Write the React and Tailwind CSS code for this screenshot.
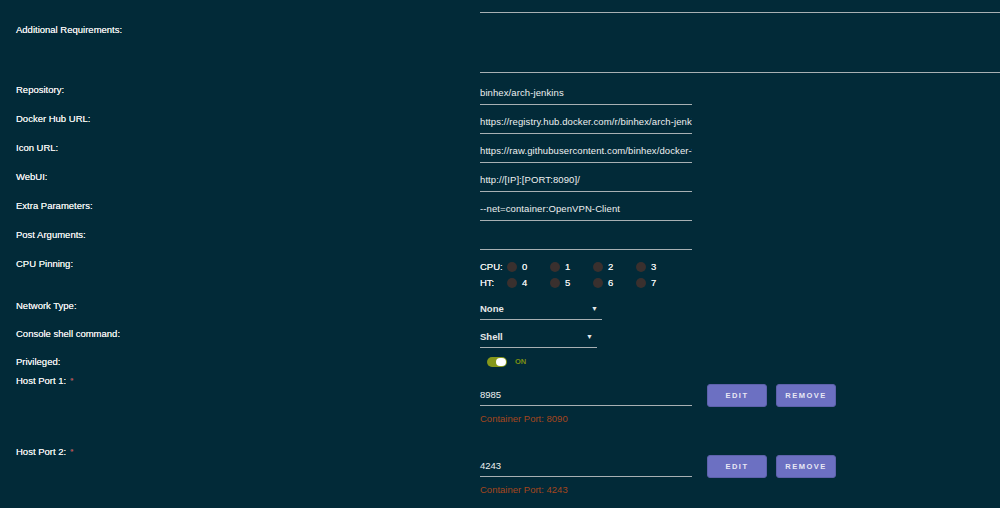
const font = { fontFamily: '"Liberation Sans", Arial, sans-serif' };

function Label({ children, required }) {
  return (
    <div className="w-[480px] shrink-0 pl-4 leading-[12px] text-[9.5px] text-[#eceeee] [text-shadow:0_0_0.3px_#eceeee]">
      {children}
      {required && <span className="ml-1 align-top text-[8px] text-[#b0181c]">*</span>}
    </div>
  );
}

function Field({ value, width = 'w-[212px]' }) {
  return (
    <div className={`${width} h-[21px] pt-[3px] border-b border-[#a8b0b3] leading-[12px] text-[9.5px] tracking-[0.1px] text-[#eef0f0] whitespace-nowrap overflow-hidden`}>
      {value}
    </div>
  );
}

function Row({ label, value }) {
  return (
    <div className="flex h-[29px]">
      <Label>{label}</Label>
      <Field value={value} />
    </div>
  );
}

function Select({ value, width }) {
  return (
    <div className={`${width} h-[20px] pt-[3px] pr-1 border-b border-[#a8b0b3] flex justify-between leading-[12px] text-[9.5px] font-semibold text-[#e6e8e8]`}>
      <span>{value}</span>
      <span className="text-[7px]">▼</span>
    </div>
  );
}

function Core({ n }) {
  return (
    <div className="flex items-center w-[43px]">
      <span className="w-[10px] h-[10px] rounded-full bg-[#3a302e]" />
      <span className="ml-[5px]">{n}</span>
    </div>
  );
}

function Port({ idx, port, container }) {
  return (
    <div className="flex h-[71px]">
      <Label required>{`Host Port ${idx}:`}</Label>
      <div className="pt-[9px]">
        <div className="flex items-center">
          <div className="w-[212px] h-[21px] pt-[4px] border-b border-[#a8b0b3] leading-[12px] text-[9.5px] text-[#eef0f0]">
            {port}
          </div>
          <button className="ml-[15px] w-[60px] h-[23px] rounded-[3px] bg-[#6c70c2] border border-[#5d61ab] text-[7.5px] font-bold tracking-[0.2em] text-[#e8e8f4]">
            EDIT
          </button>
          <button className="ml-[9px] w-[60px] h-[23px] rounded-[3px] bg-[#6c70c2] border border-[#5d61ab] text-[7.5px] font-bold tracking-[0.2em] text-[#e8e8f4]">
            REMOVE
          </button>
        </div>
        <div className="mt-[6px] leading-[12px] text-[9.5px] text-[#a5461d]">Container Port: {container}</div>
      </div>
    </div>
  );
}

export default function App() {
  return (
    <div className="w-[1000px] h-[508px] overflow-hidden bg-[#022a38]" style={font}>
      <div className="flex h-[13px]">
        <div className="w-[480px] shrink-0" />
        <div className="flex-1 border-b border-[#a8b0b3]" />
      </div>
      <div className="flex h-[71px]">
        <div className="pt-[11px]">
          <Label>Additional Requirements:</Label>
        </div>
        <div className="flex-1 h-[60px] border-b border-[#a8b0b3]" />
      </div>

      <Row label="Repository:" value="binhex/arch-jenkins" />
      <Row label="Docker Hub URL:" value="https://registry.hub.docker.com/r/binhex/arch-jenkins/" />
      <Row label="Icon URL:" value="https://raw.githubusercontent.com/binhex/docker-templates/master/binhex/images/jenkins-icon.png" />
      <Row label="WebUI:" value="http://[IP]:[PORT:8090]/" />
      <Row label="Extra Parameters:" value="--net=container:OpenVPN-Client" />
      <Row label="Post Arguments:" value="" />

      <div className="flex h-[42px]">
        <Label>CPU Pinning:</Label>
        <div className="pt-[3px] text-[9.5px] text-[#eceeee] leading-[12px] [text-shadow:0_0_0.3px_#eceeee]">
          <div className="flex items-center h-[12px]">
            <span className="w-[27px]">CPU:</span>
            {[0, 1, 2, 3].map((n) => <Core key={n} n={n} />)}
          </div>
          <div className="flex items-center h-[12px] mt-[4px]">
            <span className="w-[27px]">HT:</span>
            {[4, 5, 6, 7].map((n) => <Core key={n} n={n} />)}
          </div>
        </div>
      </div>

      <div className="flex h-[28px]">
        <Label>Network Type:</Label>
        <Select value="None" width="w-[122px]" />
      </div>
      <div className="flex h-[28px]">
        <Label>Console shell command:</Label>
        <Select value="Shell" width="w-[117px]" />
      </div>
      <div className="flex h-[19px]">
        <Label>Privileged:</Label>
        <div className="flex items-center h-[12px] pl-[7px]">
          <div className="w-[20px] h-[10px] rounded-full bg-[#86981a] flex justify-end p-px">
            <span className="w-[10px] h-[8px] rounded-full bg-white" />
          </div>
          <span className="ml-[8px] text-[7.5px] font-bold text-[#7d8f12]">ON</span>
        </div>
      </div>

      <Port idx={1} port="8985" container="8090" />
      <Port idx={2} port="4243" container="4243" />
    </div>
  );
}
